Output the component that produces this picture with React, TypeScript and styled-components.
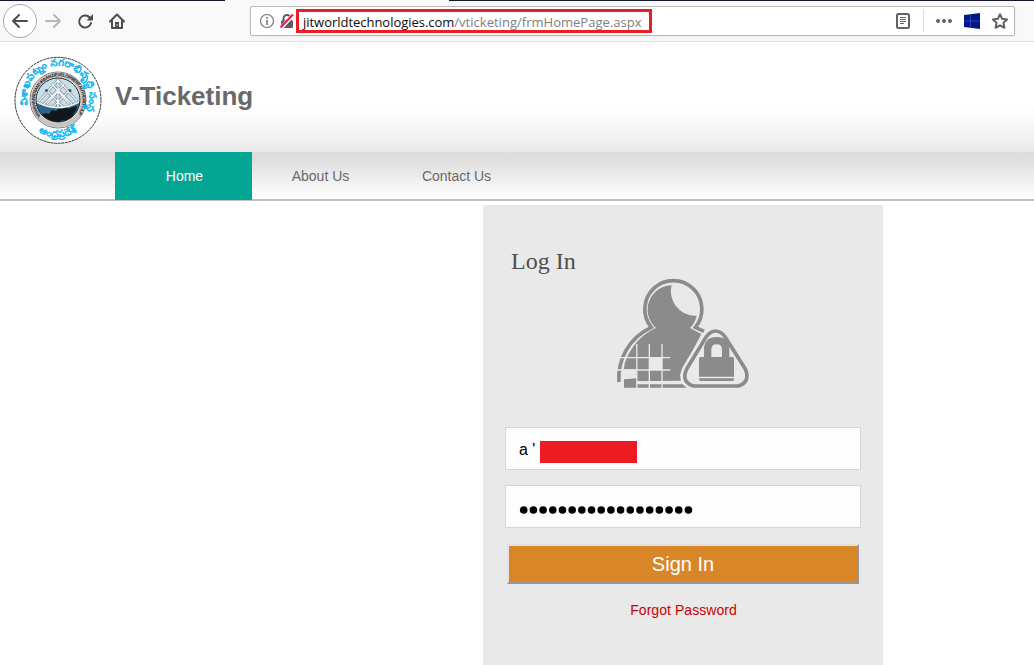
import React from 'react';
import styled, { createGlobalStyle } from 'styled-components';

const GlobalStyle = createGlobalStyle`
  * { box-sizing: border-box; }
  body { margin: 0; background: #fff; overflow: hidden; font-family: Arial, "Liberation Sans", sans-serif; }
`;

const Page = styled.div`
  width: 1034px;
  height: 665px;
  display: flex;
  flex-direction: column;
  overflow: hidden;
`;

const Toolbar = styled.div`
  height: 42px;
  flex: none;
  display: flex;
  align-items: flex-start;
  background:
    linear-gradient(#15152e, #15152e) 0 0 / 225px 1px no-repeat,
    linear-gradient(#15152e, #15152e) 449px 0 / 585px 1px no-repeat,
    #f9f9f9;
  border-bottom: 1px solid #e0e0e0;
`;

const NavIcons = styled.svg`
  width: 250px;
  height: 41px;
  flex: none;
`;

const UrlBar = styled.div`
  display: flex;
  align-items: center;
  width: 765px;
  height: 30px;
  margin-top: 6px;
  background: #fff;
  border: 1px solid #b9b9b9;
  border-radius: 2px;
  box-shadow: 0 1px 3px rgba(0, 0, 0, 0.06);
`;

const IdentityIcons = styled.svg`
  width: 45px;
  height: 28px;
  flex: none;
`;

const Address = styled.div`
  width: 356px;
  height: 24px;
  border: 3px solid #ed1c24;
  padding-left: 4px;
  font: 13px/20px "Open Sans", "Noto Sans", sans-serif;
  color: #808080;
  white-space: nowrap;
`;

const Domain = styled.span`
  color: #0c0c0d;
  letter-spacing: -0.03px;
`;

const Path = styled.span`
  letter-spacing: 0.02px;
`;

const PageActions = styled.svg`
  width: 130px;
  height: 28px;
  margin-left: auto;
  flex: none;
`;

const Header = styled.header`
  height: 110px;
  flex: none;
  display: flex;
  padding: 14px 0 0 14px;
  background: linear-gradient(#fff 0, #fff 58%, #f8f8f8 76%, #e9e9e9 100%);
`;

const Logo = styled.svg`
  width: 88px;
  height: 88px;
  flex: none;
`;

const Title = styled.h1`
  margin: 25px 0 0 13px;
  font-size: 26px;
  line-height: 30px;
  color: #696969;
`;

const Menu = styled.nav`
  height: 49px;
  flex: none;
  display: flex;
  padding-left: 115px;
  background: linear-gradient(#dcdcdc, #dedede 15%, #fff);
  border-bottom: 2px solid #c0c0c0;
`;

const MenuItem = styled.a<{ $active?: boolean }>`
  width: ${p => (p.$active ? 137 : 136)}px;
  height: 48px;
  padding-left: ${p => (p.$active ? 2 : 1)}px;
  font-size: 14px;
  line-height: 48px;
  text-align: center;
  color: ${p => (p.$active ? '#fff' : '#696969')};
  background: ${p => (p.$active ? '#05a594' : 'transparent')};
`;

const LoginCard = styled.main`
  width: 400px;
  height: 460px;
  margin: 4px 0 0 483px;
  padding: 0 22px;
  background: #e9e9e9;
  display: flex;
  flex-direction: column;
`;

const LoginHeading = styled.h2`
  margin: 42px 0 0 6px;
  font: 24px/28px "Liberation Serif", "Times New Roman", serif;
  color: #4f4f4f;
`;

const UserLock = styled.svg`
  width: 160px;
  height: 130px;
  margin: -5px 0 0 95px;
  flex: none;
`;

const Field = styled.div<{ $top: number }>`
  width: 356px;
  height: 43px;
  flex: none;
  margin-top: ${p => p.$top}px;
  padding: 3px 13px 0;
  display: flex;
  align-items: center;
  background: #fdfdfd;
  border: 1px solid #d5d5d5;
  font-size: 16px;
  color: #000;
  white-space: pre;
`;

const Redaction = styled.span`
  width: 97px;
  height: 22px;
  margin: 3px 0 0 5px;
  background: #ed1c24;
`;

const Dots = styled.svg`
  width: 176px;
  height: 10px;
  margin-top: 3px;
`;

const SignIn = styled.button`
  width: 352px;
  height: 40px;
  flex: none;
  margin: 16px 0 0 2px;
  padding: 0;
  border: 2px solid;
  border-color: #e3e3e3 #979797 #979797 #e3e3e3;
  background: #d98629;
  color: #fff;
  font: 20px/36px Arial, "Liberation Sans", sans-serif;
`;

const Forgot = styled.a`
  margin-top: 18px;
  padding-left: 1px;
  font-size: 14px;
  line-height: 16px;
  letter-spacing: 0.05px;
  text-align: center;
  color: #c80000;
`;

function BrowserNav() {
  return (
    <NavIcons viewBox="0 0 250 41" fill="none" strokeWidth="2" strokeLinecap="round" strokeLinejoin="round">
      <circle cx="20" cy="21" r="16.5" fill="#fff" stroke="#aaa" strokeWidth="1" />
      <path d="M27 21H13M19 15l-6 6 6 6" stroke="#4c4c4e" />
      <path d="M46 21h14M54 15l6 6-6 6" stroke="#b7b7b8" />
      <path d="M89.6 17.5A6 6 0 1 0 91 23" stroke="#4c4c4e" />
      <path d="M93 14v6.5h-6.5z" fill="#4c4c4e" />
      <path d="M110 21.5l7-7 7 7M112 20.500V28h10v-7.500" stroke="#4c4c4e" />
      <path d="M115 28v-6h4v6z" fill="#4c4c4e" />
      <path d="M117 24.500v1" stroke="#ddd" strokeWidth="1" />
    </NavIcons>
  );
}

function Identity() {
  return (
    <IdentityIcons viewBox="251 7 45 28" fill="none">
      <circle cx="267" cy="21" r="6.500" stroke="#737373" strokeWidth="1.200" />
      <path d="M267 20v5M267 17v1.700" stroke="#737373" strokeWidth="1.600" />
      <path d="M283.500 21v-2.500a3.500 3.500 0 0 1 7 0V21" stroke="#5c5c5e" strokeWidth="2" />
      <rect x="281" y="20.500" width="12" height="7.500" rx="1" fill="#5c5c5e" />
      <path d="M281 28L293.500 14.500" stroke="#fff" strokeWidth="4" />
      <path d="M280.500 27.500L293 14.500" stroke="#e8184a" strokeWidth="2" />
    </IdentityIcons>
  );
}

function Actions() {
  return (
    <PageActions viewBox="884 7 130 28" fill="none">
      <rect x="897" y="14" width="12" height="14" rx="1.500" stroke="#626264" strokeWidth="2" />
      <path d="M900 17.500h6M900 19.500h6M900 21.500h6M900 23.500h4" stroke="#626264" />
      <path d="M923.500 10v22" stroke="#dedede" />
      <g fill="#626264">
        <circle cx="938" cy="21" r="2" />
        <circle cx="944" cy="21" r="2" />
        <circle cx="950" cy="21" r="2" />
      </g>
      <path d="M964 15l16-2v16l-16-2z" fill="#00188f" />
      <path d="M970.500 14v14M964 21h16" stroke="#5263b4" strokeWidth=".6" />
      <path d="M1000 14.200l2.100 4.600 5 .6-3.700 3.400 1 5-4.400-2.500-4.400 2.500 1-5-3.700-3.400 5-.6z" stroke="#626264" strokeWidth="2" strokeLinejoin="round" />
    </PageActions>
  );
}

function Emblem() {
  return (
    <Logo viewBox="14 56 88 88" fill="none">
      <defs>
        <path id="arcTop" d="M28 105A31.200 31.200 0 1 1 86.500 110" />
        <path id="arcBottom" d="M37 131A37.500 37.500 0 0 0 82 128" />
        <path id="ringText" d="M41 116A23.800 23.800 0 1 1 75 117.500" />
        <clipPath id="seal"><circle cx="58" cy="100" r="22" /></clipPath>
      </defs>
      <circle cx="58" cy="100.300" r="43" fill="#fff" stroke="#333" strokeWidth="1" strokeDasharray="3 .6" />
      <circle cx="58" cy="100" r="28" fill="#f3f3f3" stroke="#555" strokeWidth=".8" />
      <circle cx="58" cy="100" r="25.200" stroke="#c5c5c5" strokeWidth="4.500" />
      <text fontFamily="Liberation Sans" fontSize="4.600" fontWeight="700" fill="#262626">
        <textPath href="#ringText" textLength="106">VISAKHAPATNAM URBAN DEVELOPMENT AUTHORITY A.P</textPath>
      </text>
      <g clipPath="url(#seal)">
        <path d="M36 78h44v44H36z" fill="#c6dfed" />
        <path d="M36 103q11 5 22 5t22-6v20H36z" fill="#286487" />
        <path d="M41 115l5-2 3 1 3-4 4 1 3-3 3 1 4-3 2 3 5-2 4-1-1 5-3 3 1 5-5-1-2 4-5-2-3 3-5-2-5 2-3-4-4 0z" fill="#11171b" />
        <path d="M39 101L58 80l19 21M44 104l14-14 14 14M46 90l17 17M52 84l17 20M70 90l-17 17M64 84l-17 20M58 79v28M37 102q21 11 42 0" stroke="#67747c" strokeWidth="2.500" />
        <path d="M39 101L58 80l19 21M44 104l14-14 14 14M46 90l17 17M52 84l17 20M70 90l-17 17M64 84l-17 20M58 79v28M37 102q21 11 42 0" stroke="#eef3f4" strokeWidth="1.500" />
        <g fill="#46545c">
          <circle cx="46.500" cy="90.500" r="1.500" />
          <circle cx="70" cy="90.500" r="1.500" />
        </g>
      </g>
      <circle cx="58" cy="100" r="22" stroke="#222" strokeWidth="1" />
      <g fill="#09b3f0" stroke="#09b3f0" strokeWidth=".5" fontFamily="Noto Sans Telugu, Noto Sans, sans-serif" fontSize="10">
        <text><textPath href="#arcTop" textLength="120" lengthAdjust="spacingAndGlyphs">విశాఖపట్నం నగరాభివృద్ధి సంస్థ</textPath></text>
        <text><textPath href="#arcBottom" startOffset="2" textLength="40" lengthAdjust="spacingAndGlyphs">ఆంధ్రప్రదేశ్</textPath></text>
      </g>
    </Logo>
  );
}

function UserLockArt() {
  return (
    <UserLock viewBox="0 0 480 390" fill="none">
      <path d="M57 336C52 272 85 204 154 172A85.600 85.600 0 1 1 286 172L312 184" stroke="#8b8b8b" strokeWidth="11" />
      <path d="M215 46A73 73 0 0 0 168 174C135 187 100 220 81 262Q72 280 71 300L68 353H262L240 315 304 192 270 174Q285 159 290 137C238 140 203 90 215 46z" fill="#8b8b8b" />
      <path d="M45 263h166M45 300h166M110 336h145M110.500 222v135M148 222v135M186 222v135" stroke="#e9e9e9" strokeWidth="4" />
      <path d="M110 334v9h150v-7q-13-1-16-4zM148 264h38v36h-38z" fill="#e9e9e9" />
      <path d="M66 298h44v27l-38 3v27H65z" fill="#e9e9e9" />
      <path d="M319 200Q347 166 375 200L436 297Q452 337 414 348H282Q242 337 260 297z" fill="#e9e9e9" stroke="#e9e9e9" strokeWidth="27" strokeLinejoin="round" />
      <path d="M319 200Q347 166 375 200L436 297Q452 337 414 348H282Q242 337 260 297z" stroke="#8b8b8b" strokeWidth="11" strokeLinejoin="round" />
      <path d="M323 266v-27q0-27 27-27t27 27v27" stroke="#8b8b8b" strokeWidth="22" />
      <path d="M302 261h95q5 0 5 5v54H297v-54q0-5 5-5zM297 325h105v3q0 5-5 5h-95q-5 0-5-5z" fill="#8b8b8b" />
    </UserLock>
  );
}

function PasswordDots() {
  return (
    <Dots viewBox="0 0 176 10">
      {Array.from({ length: 18 }, (_, i) => (
        <circle key={i} cx={4.700 + i * 9.690} cy="5" r="3.800" fill="#000" />
      ))}
    </Dots>
  );
}

export default function App() {
  return (
    <Page>
      <GlobalStyle />
      <Toolbar>
        <BrowserNav />
        <UrlBar>
          <Identity />
          <Address><Domain>jitworldtechnologies.com</Domain><Path>/vticketing/frmHomePage.aspx</Path></Address>
          <Actions />
        </UrlBar>
      </Toolbar>
      <Header>
        <Emblem />
        <Title>V-Ticketing</Title>
      </Header>
      <Menu>
        <MenuItem $active>Home</MenuItem>
        <MenuItem>About Us</MenuItem>
        <MenuItem>Contact Us</MenuItem>
      </Menu>
      <LoginCard>
        <LoginHeading>Log In</LoginHeading>
        <UserLockArt />
        <Field $top={27}>a '<Redaction /></Field>
        <Field $top={15}><PasswordDots /></Field>
        <SignIn>Sign In</SignIn>
        <Forgot>Forgot Password</Forgot>
      </LoginCard>
    </Page>
  );
}
